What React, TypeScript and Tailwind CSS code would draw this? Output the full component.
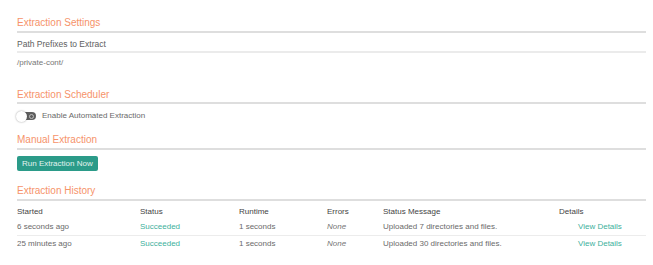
import React from "react"

// Rows of the history table
const history = [
    { started: "6 seconds ago", status: "Succeeded", runtime: "1 seconds", errors: "None", message: "Uploaded 7 directories and files." },
    { started: "25 minutes ago", status: "Succeeded", runtime: "1 seconds", errors: "None", message: "Uploaded 30 directories and files." },
]

const cols = "grid grid-cols-[123px_99px_88px_56px_176px_1fr]"

function SectionTitle({ children, className = "" }: { children: React.ReactNode; className?: string }) {
    return (
        <div className={`text-[10px] leading-[12px] text-[#f6936a] pb-[2px] border-b-2 border-[#dedede] ${className}`}>
            {children}
        </div>
    )
}

function Toggle() {
    return (
        <div className="relative w-[20px] h-[10px] flex items-center">
            <div className="w-[19px] h-[8px] rounded-full bg-[#5f5f5f] flex items-center justify-end pr-[2px]">
                <div className="w-[5px] h-[5px] rounded-full border border-[#bdbdbd]" />
            </div>
            <div className="absolute left-[-1px] top-[-0.5px] w-[11px] h-[11px] rounded-full bg-white shadow-[0_0_2px_rgba(0,0,0,0.4)]" />
        </div>
    )
}

export default function App() {
    return (
        <div className="w-[653px] h-[265px] bg-white pl-[17px] pr-[7px] pt-[17px] font-['Liberation_Sans',Arial,sans-serif] overflow-hidden">
            {/* Settings */}
            <SectionTitle>Extraction Settings</SectionTitle>
            <div className="pt-[5px] pb-[1px] text-[8.5px] leading-[12px] text-[#5e5e5e] border-b-2 border-[#ebebeb]">
                Path Prefixes to Extract
            </div>
            <div className="pt-[4px] text-[8px] leading-[12px] text-[#777]">/private-cont/</div>

            {/* Scheduler */}
            <SectionTitle className="mt-[20px] !pb-[1px]">Extraction Scheduler</SectionTitle>
            <div className="mt-[6px] flex items-center gap-[5px] h-[12px]">
                <Toggle />
                <span className="text-[8px] leading-[12px] text-[#6a6a6a]">Enable Automated Extraction</span>
            </div>

            {/* Manual */}
            <SectionTitle className="mt-[12px]">Manual Extraction</SectionTitle>
            <button className="mt-[6px] h-[15px] px-[5px] rounded-[2px] bg-[#2b9b89] text-[8px] leading-[15px] text-[#e2f3ef] block">
                Run Extraction Now
            </button>

            {/* History */}
            <SectionTitle className="mt-[14px]">Extraction History</SectionTitle>
            <div className="text-[8px] leading-[12px]">
                <div className={`${cols} pt-[5px] text-[#444]`}>
                    <div>Started</div>
                    <div>Status</div>
                    <div>Runtime</div>
                    <div>Errors</div>
                    <div>Status Message</div>
                    <div>Details</div>
                </div>
                {history.map((r, i) => (
                    <div
                        key={i}
                        className={`${cols} text-[#6a6a6a] ${i === 0 ? "pt-[3px] pb-[2px] border-b border-[#ececec]" : "pt-[2px]"}`}
                    >
                        <div>{r.started}</div>
                        <div className="text-[#3db09c]">{r.status}</div>
                        <div>{r.runtime}</div>
                        <div className="italic text-[#777]">{r.errors}</div>
                        <div>{r.message}</div>
                        <div className="pl-[19px] text-[#3db09c]">View Details</div>
                    </div>
                ))}
            </div>
        </div>
    )
}
